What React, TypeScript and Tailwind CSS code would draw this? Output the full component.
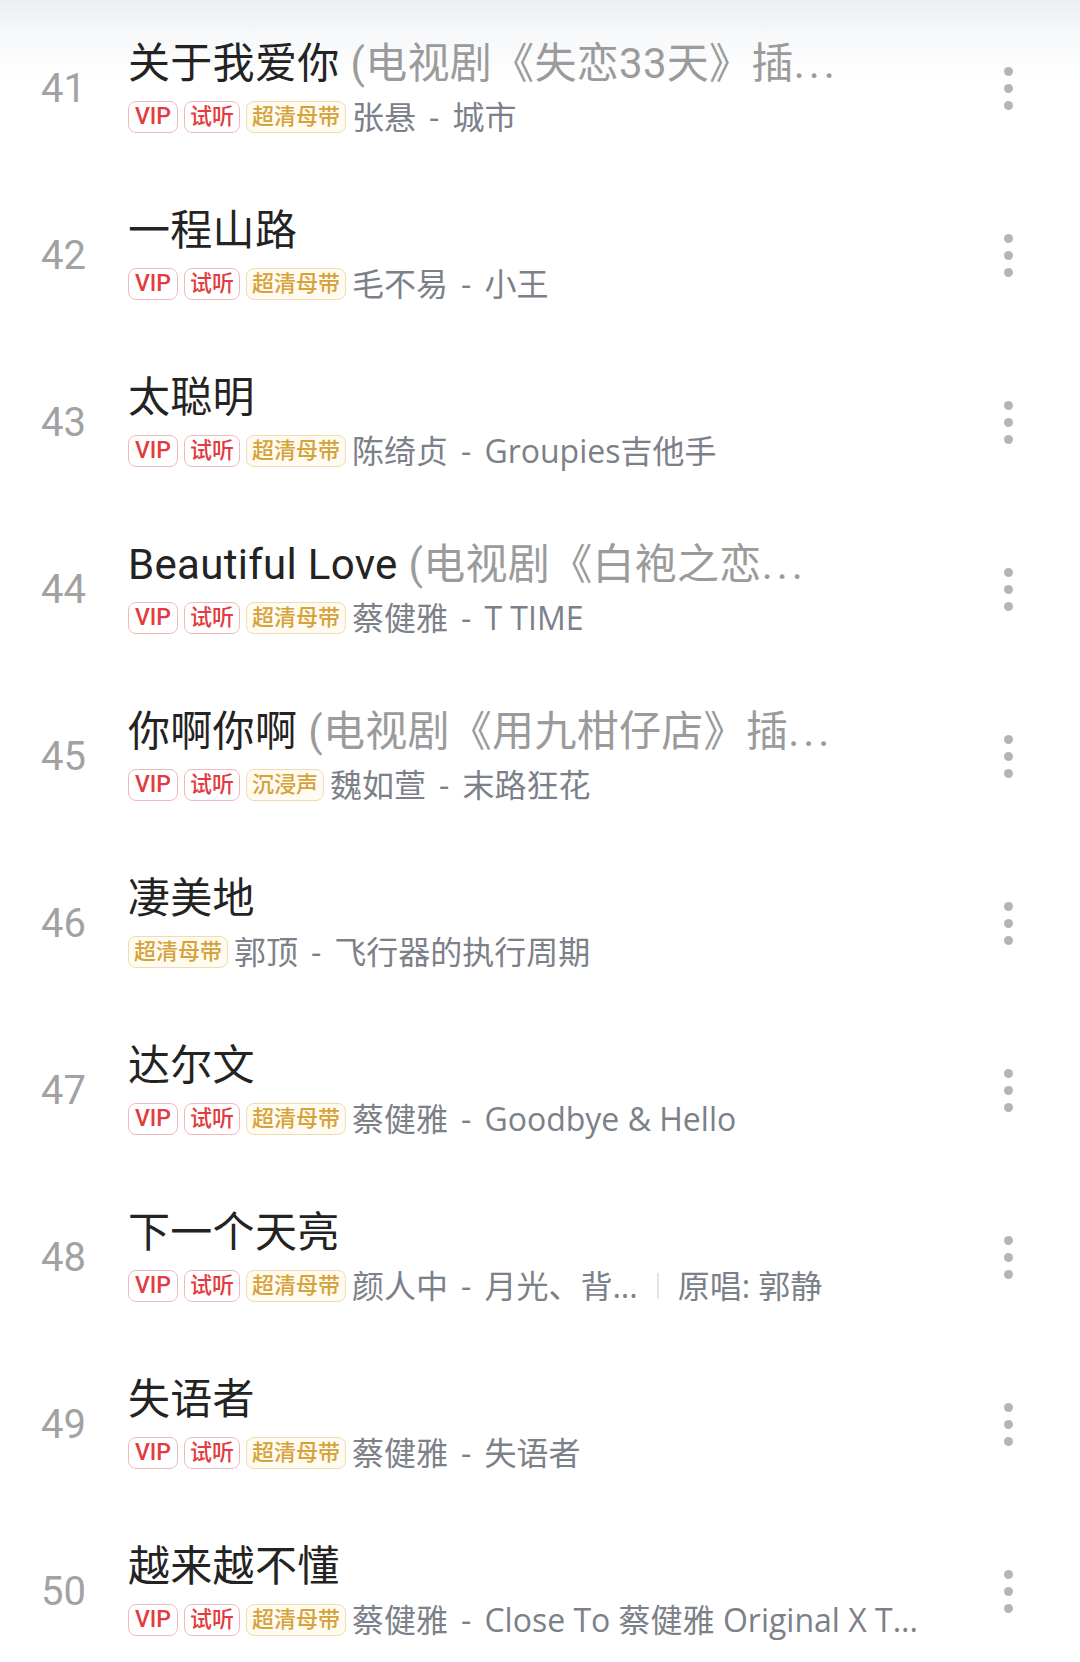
import React from "react";

type Tag = "vip" | "try" | "hq" | "surround";

interface Song {
  no: number;
  title: string;
  extra?: string;
  tags: Tag[];
  artist: string;
  album: string;
  original?: string;
}

const songs: Song[] = [
  { no: 41, title: "关于我爱你", extra: "(电视剧《失恋33天》插", tags: ["vip", "try", "hq"], artist: "张悬", album: "城市" },
  { no: 42, title: "一程山路", tags: ["vip", "try", "hq"], artist: "毛不易", album: "小王" },
  { no: 43, title: "太聪明", tags: ["vip", "try", "hq"], artist: "陈绮贞", album: "Groupies吉他手" },
  { no: 44, title: "Beautiful Love", extra: "(电视剧《白袍之恋", tags: ["vip", "try", "hq"], artist: "蔡健雅", album: "T TIME" },
  { no: 45, title: "你啊你啊", extra: "(电视剧《用九柑仔店》插", tags: ["vip", "try", "surround"], artist: "魏如萱", album: "末路狂花" },
  { no: 46, title: "凄美地", tags: ["hq"], artist: "郭顶", album: "飞行器的执行周期" },
  { no: 47, title: "达尔文", tags: ["vip", "try", "hq"], artist: "蔡健雅", album: "Goodbye & Hello" },
  { no: 48, title: "下一个天亮", tags: ["vip", "try", "hq"], artist: "颜人中", album: "月光、背...", original: "原唱: 郭静" },
  { no: 49, title: "失语者", tags: ["vip", "try", "hq"], artist: "蔡健雅", album: "失语者" },
  { no: 50, title: "越来越不懂", tags: ["vip", "try", "hq"], artist: "蔡健雅", album: "Close To 蔡健雅 Original X T..." },
];

const Badge: React.FC<{ tag: Tag }> = ({ tag }) => {
  if (tag === "vip") {
    return (
      <span className="h-[32px] px-[6px] flex items-center border border-[#f0b9bb] rounded-[8px] text-[23px] font-medium text-[#e23b40] leading-none">
        VIP
      </span>
    );
  }
  if (tag === "try") {
    return (
      <span className="h-[32px] px-[5px] flex items-center border border-[#f0b9bb] rounded-[8px] text-[22px] font-medium text-[#e23b40] leading-none">
        试听
      </span>
    );
  }
  return (
    <span className="h-[32px] px-[5px] flex items-center border border-[#eedcb2] bg-[#fffbf1] rounded-[8px] text-[22px] font-medium text-[#d6a23a] leading-none">
      {tag === "hq" ? "超清母带" : "沉浸声"}
    </span>
  );
};

const SongRow: React.FC<{ song: Song }> = ({ song }) => (
  <div className="h-[167px] flex items-center">
    <div className="w-[128px] pl-[41px] text-[40px] leading-none text-[#a2a2a2]">{song.no}</div>
    <div className="flex-1 min-w-0 flex flex-col gap-[11px] pb-[3px]">
      <div className="h-[48px] flex items-center text-[42px] leading-[48px] tracking-[0.3px] whitespace-nowrap">
        <span className="text-[#232323]">{song.title}</span>
        {song.extra && (
          <span className="text-[#9b9b9b] ml-[11px]">
            {song.extra}
            <span className="tracking-[4px]">...</span>
          </span>
        )}
      </div>
      <div className="h-[36px] flex items-center gap-[6px] whitespace-nowrap">
        {song.tags.map((t, i) => (
          <Badge key={i} tag={t} />
        ))}
        <span className="text-[32px] leading-none text-[#7c8089] font-['Open_Sans','Noto_Sans_CJK_SC',sans-serif]">
          {song.artist}
          <span className="mx-[13px]">-</span>
          {song.album}
        </span>
        {song.original && (
          <>
            <span className="w-[2px] h-[26px] bg-[#e4e4e6] mx-[13px]" />
            <span className="text-[32px] leading-none text-[#7c8089] font-['Open_Sans','Noto_Sans_CJK_SC',sans-serif]">
              {song.original}
            </span>
          </>
        )}
      </div>
    </div>
    <div className="w-[40px] mr-[52px] flex flex-col items-center gap-[8px]">
      <span className="w-[9px] h-[9px] rounded-full bg-[#b5b5b5]" />
      <span className="w-[9px] h-[9px] rounded-full bg-[#b5b5b5]" />
      <span className="w-[9px] h-[9px] rounded-full bg-[#b5b5b5]" />
    </div>
  </div>
);

export default function App() {
  return (
    <div className="w-[1080px] h-[1662px] overflow-hidden pt-[5px] bg-[linear-gradient(to_bottom,#eceef1_0px,#f7f8fa_35px,#ffffff_80px)] font-[Roboto,'Noto_Sans_CJK_SC',sans-serif]">
      {songs.map((s) => (
        <SongRow key={s.no} song={s} />
      ))}
    </div>
  );
}
